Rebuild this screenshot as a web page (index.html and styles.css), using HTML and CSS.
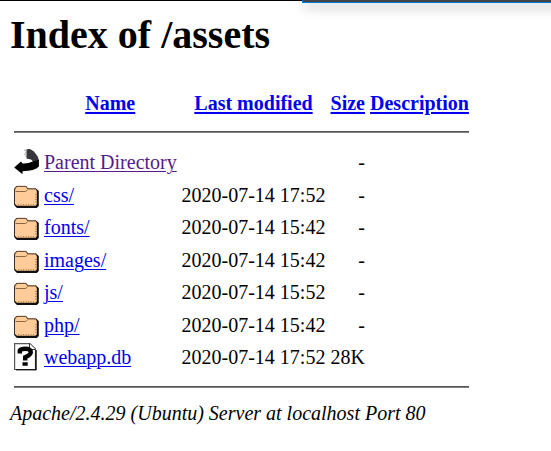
FILE: index.html
```html
<!DOCTYPE html>
<html lang="en">
<head>
<meta charset="utf-8">
<title>Index of /assets</title>
<link rel="stylesheet" href="styles.css">
</head>
<body>
<svg width="0" height="0" class="defs">
  <symbol id="back" viewBox="0 0 25 27.5">
    <path d="M12.500 1.200 16 1 20 3.500 24 9 24.800 12.500 20 14.500 17 11.500 12.500 10.500Z" fill="#38383c"/>
    <path d="M10.500 1.500h1v1.500h-1zm1 2h1v1.500h-1zm-1 2h1v1.500h-1zm1 2h1v1.500h-1z" fill="#888"/>
    <path d="M24.900 11.500V18.500Q21 23 8.500 23.200V26.200L.2 19.500 7 13.500 8.500 15.500Q14 16 18.500 13.500Q22 13 24.900 11.500Z" fill="#000"/>
  </symbol>
  <symbol id="folder" viewBox="0 0 25 27.5">
    <path d="M2.5 5H12L14 7.5H22L24.8 10V25L22.8 27H3L.5 24.5V7Z" fill="#111"/>
    <path d="M1 8 3 5.8H11.8L13.6 8.2H21.5L22.8 10V23.3L21.5 24.8H3L1 23Z" fill="#ffcc99"/>
    <path d="M1.5 10.5H11.5L13.5 9M.8 9.5V7.2L2.8 5.3H12L13.8 7.7H21.5" fill="none" stroke="#805a38" stroke-width=".9"/>
    <path d="M4 23.8H21M21.8 13V23" fill="none" stroke="#996633" stroke-width="1" stroke-dasharray="1 1.5"/>
    <path d="M.5 8V24" stroke="#333" stroke-width="1"/>
  </symbol>
  <symbol id="unknown" viewBox="0 0 25 27.5">
    <path d="M.6.6H16L21.5 6V26.5H.6Z" fill="#fff" stroke="#555" stroke-width="1.2"/>
    <path d="M2 27H22V7" fill="none" stroke="#000" stroke-width="1.3"/>
    <path d="M15.5.8V6.5H21.5" fill="#fff" stroke="#333"/>
    <path d="M5.8 10.5V7.5Q7 5.700 11 5.700 16.800 5.700 16.800 9.300 16.800 12 11.200 14.200V17.500" fill="none" stroke="#000" stroke-width="4.400"/>
    <path d="M8.5 19.2h5.2v3.5H8.5z" fill="#000"/>
  </symbol>
</svg>
<div class="window-edge"></div>
<div class="window-overlap"></div>
<h1>Index of /assets</h1>
<main class="listing">
  <div class="row head"><span></span><a href="#">Name</a><a href="#">Last modified</a><a href="#">Size</a><a href="#">Description</a></div>
  <hr>
  <div class="row"><svg class="icon"><use href="#back"/></svg><span><a class="visited" href="#">Parent Directory</a></span><span></span><span class="size">-</span></div>
  <div class="row"><svg class="icon"><use href="#folder"/></svg><span><a href="#">css/</a></span><span>2020-07-14 17:52</span><span class="size">-</span></div>
  <div class="row"><svg class="icon"><use href="#folder"/></svg><span><a href="#">fonts/</a></span><span>2020-07-14 15:42</span><span class="size">-</span></div>
  <div class="row"><svg class="icon"><use href="#folder"/></svg><span><a href="#">images/</a></span><span>2020-07-14 15:42</span><span class="size">-</span></div>
  <div class="row"><svg class="icon"><use href="#folder"/></svg><span><a href="#">js/</a></span><span>2020-07-14 15:52</span><span class="size">-</span></div>
  <div class="row"><svg class="icon"><use href="#folder"/></svg><span><a href="#">php/</a></span><span>2020-07-14 15:42</span><span class="size">-</span></div>
  <div class="row"><svg class="icon"><use href="#unknown"/></svg><span><a href="#">webapp.db</a></span><span>2020-07-14 17:52</span><span class="size">28K</span></div>
  <hr class="last">
</main>
<address>Apache/2.4.29 (Ubuntu) Server at localhost Port 80</address>
</body>
</html>
```
FILE: styles.css
```css
body {
  margin: 0;
  padding: 0 10px;
  height: 451px;
  box-sizing: border-box;
  overflow: hidden;
  background: #fff;
  color: #000;
  font: 20px/23px "Liberation Serif", "Times New Roman", serif;
  white-space: nowrap;
}
.defs { display: block; }
.window-edge {
  position: absolute;
  top: 0;
  left: 0;
  width: 100%;
  height: 1px;
  background: #000;
}
.window-overlap {
  position: absolute;
  top: 0;
  left: 302px;
  width: 260px;
  height: 2px;
  background: #444;
  border-bottom: 1px solid #0078d7;
  border-left: 1px solid #0078d7;
  box-shadow: 2px 4px 12px rgba(0, 0, 0, .4);
}
h1 {
  margin: 0;
  padding-top: 12px;
  font-size: 40px;
  line-height: 46px;
}
.listing {
  width: 455px;
  margin: 34px 0 0 4px;
}
.row {
  display: grid;
  grid-template-columns: 25px 132.5px 144px 34.5px 99px;
  column-gap: 5px;
  align-items: center;
  height: 32.5px;
}
.row > span { padding-top: 2px; }
.head {
  height: 23px;
  font-weight: bold;
  justify-items: center;
}
a { color: #0000ee; text-decoration-thickness: 1px; text-underline-offset: 2px; }
.head a { text-decoration-thickness: 2px; }
a.visited { color: #551a8b; }
.icon { display: block; width: 25px; height: 27.5px; }
.size { text-align: right; }
hr {
  height: 1px;
  margin: 16px 0 12.5px;
  border: 0;
  border-top: 1px solid #555;
  background: #808080;
}
hr.last { margin: 13px 0 14px; }
address { font-style: italic; }
```
